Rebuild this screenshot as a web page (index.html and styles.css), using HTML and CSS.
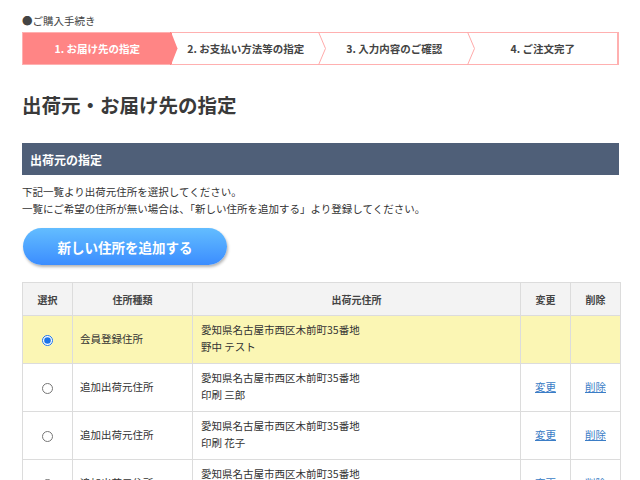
FILE: index.html
```html
<!DOCTYPE html>
<html lang="ja">
<head>
<meta charset="utf-8">
<title>出荷元・お届け先の指定</title>
<link rel="stylesheet" href="styles.css">
</head>
<body>
<div class="page">
  <p class="crumb">●ご購入手続き</p>
  <ol class="steps">
    <li class="step is-current">1. お届け先の指定</li>
    <li class="step">2. お支払い方法等の指定</li>
    <li class="step">3. 入力内容のご確認</li>
    <li class="step step-last">4. ご注文完了</li>
  </ol>

  <h1 class="title">出荷元・お届け先の指定</h1>

  <h2 class="section-bar">出荷元の指定</h2>
  <p class="note">下記一覧より出荷元住所を選択してください。<br>一覧にご希望の住所が無い場合は、「新しい住所を追加する」より登録してください。</p>

  <button class="add-btn" type="button">新しい住所を追加する</button>

  <table class="addr-table">
    <thead>
      <tr>
        <th class="c-sel">選択</th>
        <th class="c-type">住所種類</th>
        <th class="c-addr">出荷元住所</th>
        <th class="c-act">変更</th>
        <th class="c-act">削除</th>
      </tr>
    </thead>
    <tbody>
      <tr class="is-selected">
        <td class="c-sel"><input type="radio" name="ship" checked></td>
        <td class="c-type">会員登録住所</td>
        <td class="c-addr">愛知県名古屋市西区木前町35番地<br>野中 テスト</td>
        <td class="c-act"></td>
        <td class="c-act"></td>
      </tr>
      <tr>
        <td class="c-sel"><input type="radio" name="ship"></td>
        <td class="c-type">追加出荷元住所</td>
        <td class="c-addr">愛知県名古屋市西区木前町35番地<br>印刷 三郎</td>
        <td class="c-act"><a href="#">変更</a></td>
        <td class="c-act"><a href="#">削除</a></td>
      </tr>
      <tr>
        <td class="c-sel"><input type="radio" name="ship"></td>
        <td class="c-type">追加出荷元住所</td>
        <td class="c-addr">愛知県名古屋市西区木前町35番地<br>印刷 花子</td>
        <td class="c-act"><a href="#">変更</a></td>
        <td class="c-act"><a href="#">削除</a></td>
      </tr>
      <tr>
        <td class="c-sel"><input type="radio" name="ship"></td>
        <td class="c-type">追加出荷元住所</td>
        <td class="c-addr">愛知県名古屋市西区木前町35番地<br>印刷 次郎</td>
        <td class="c-act"><a href="#">変更</a></td>
        <td class="c-act"><a href="#">削除</a></td>
      </tr>
    </tbody>
  </table>
</div>
</body>
</html>
```

FILE: styles.css
```css
* { box-sizing: border-box; }

html, body {
  margin: 0;
  padding: 0;
  background: #fff;
}

body {
  font-family: "Noto Sans CJK JP", "Noto Sans", "Liberation Sans", sans-serif;
  color: #333;
  font-size: 10.5px;
}

.page {
  padding: 14px 21px 0 22px;
}

.crumb {
  margin: 0;
  font-size: 10.5px;
  line-height: 14px;
  color: #444;
}

/* steps */
.steps {
  list-style: none;
  margin: 4px 0 0;
  padding: 0;
  display: flex;
  height: 33px;
  border: 1px solid #ffb0b0;
  border-right-width: 2px;
}

.step {
  position: relative;
  flex: 1 1 0;
  display: flex;
  align-items: center;
  justify-content: center;
  font-size: 10.5px;
  font-weight: bold;
  color: #444;
}

.step::after {
  content: "";
  position: absolute;
  top: -1px;
  bottom: -1px;
  right: -6px;
  width: 8px;
  background: url("data:image/svg+xml,%3Csvg xmlns='http://www.w3.org/2000/svg' viewBox='0 0 8 33' preserveAspectRatio='none'%3E%3Cpath d='M0.5 0 L7.5 16.5 L0.5 33' fill='none' stroke='%23ffaaaa' stroke-width='1'/%3E%3C/svg%3E") no-repeat;
  background-size: 100% 100%;
  z-index: 1;
}

.step-last::after { display: none; }

.step.is-current {
  background: #ff8585;
  color: #fff;
}

.step.is-current::after {
  background: url("data:image/svg+xml,%3Csvg xmlns='http://www.w3.org/2000/svg' viewBox='0 0 8 33' preserveAspectRatio='none'%3E%3Cpath d='M0 0 L1 0 L7.5 16.5 L1 33 L0 33 Z' fill='%23ff8585'/%3E%3C/svg%3E") no-repeat;
  background-size: 100% 100%;
}

/* title */
.title {
  margin: 26px 0 0;
  font-size: 19.5px;
  line-height: 28px;
  font-weight: bold;
  color: #3a3a3a;
}

.section-bar {
  margin: 24px 0 0;
  height: 32px;
  display: flex;
  align-items: center;
  padding: 0 8px;
  background: #4f5f78;
  color: #fff;
  font-size: 12px;
  font-weight: bold;
}

.note {
  margin: 8px 0 0;
  font-size: 10.5px;
  line-height: 17px;
  color: #333;
}

.add-btn {
  display: block;
  margin: 11px 0 0 1px;
  width: 204px;
  height: 37px;
  border: none;
  border-radius: 19px;
  background: linear-gradient(#63bdff, #3b8dff);
  box-shadow: 1px 2px 3px rgba(0, 0, 0, 0.3);
  color: #fff;
  font-family: inherit;
  font-size: 13.5px;
  font-weight: bold;
  letter-spacing: 0;
  padding: 0;
}

/* table */
.addr-table {
  margin-top: 17px;
  width: 598px;
  border-collapse: collapse;
  table-layout: fixed;
  font-size: 10.5px;
}

.addr-table th,
.addr-table td {
  border: 1px solid #dcdcdc;
  padding: 0;
}

.addr-table th {
  height: 33px;
  background: #f3f3f3;
  font-weight: 600;
  color: #444;
  text-align: center;
  font-size: 10px;
}

.addr-table td {
  height: 48px;
  line-height: 17px;
  vertical-align: middle;
  padding-bottom: 3px;
}

.c-sel { width: 50px; text-align: center; }
.c-type { width: 120px; }
.c-addr { width: 328px; }
.c-act { width: 50px; text-align: center; }

td.c-type { padding-left: 7px; }
td.c-addr { padding-left: 8px; }
td.c-sel { padding-top: 2px; }

.addr-table input[type="radio"] {
  margin: 0;
  width: 11px;
  height: 11px;
  accent-color: #1a73e8;
  vertical-align: middle;
}

.is-selected td {
  background: #fbf6b4;
}

.addr-table a {
  color: #3b7dc6;
  text-decoration: underline;
}
```
